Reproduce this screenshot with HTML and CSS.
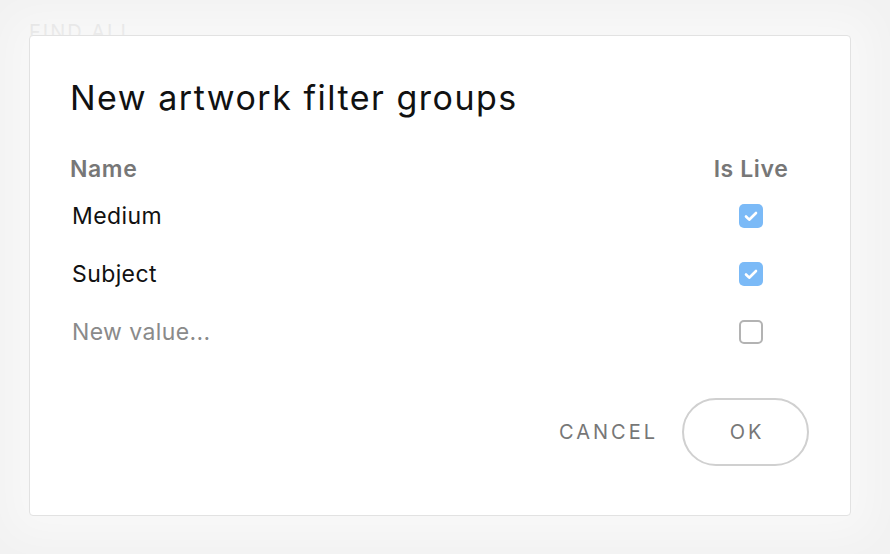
FILE: index.html
```html
<!DOCTYPE html>
<html>
<head>
<meta charset="utf-8">
<link rel="stylesheet" href="styles.css">
</head>
<body>
<div class="page">
  <div class="bg-title">FIND ALL</div>
</div>
<div class="dialog">
  <h1 class="title">New artwork filter groups</h1>
  <div class="table">
    <div class="row head">
      <div class="name">Name</div>
      <div class="live">Is Live</div>
    </div>
    <div class="row">
      <div class="name">Medium</div>
      <div class="live"><span class="cb checked"><svg viewBox="0 0 24 24" width="24" height="24"><path d="M7 12.5l3.2 3.2L17 9" fill="none" stroke="#fff" stroke-width="2.6" stroke-linecap="round" stroke-linejoin="round"/></svg></span></div>
    </div>
    <div class="row">
      <div class="name">Subject</div>
      <div class="live"><span class="cb checked"><svg viewBox="0 0 24 24" width="24" height="24"><path d="M7 12.5l3.2 3.2L17 9" fill="none" stroke="#fff" stroke-width="2.6" stroke-linecap="round" stroke-linejoin="round"/></svg></span></div>
    </div>
    <div class="row">
      <div class="name placeholder">New value...</div>
      <div class="live"><span class="cb"></span></div>
    </div>
  </div>
  <div class="actions">
    <button class="btn cancel">CANCEL</button>
    <button class="btn ok">OK</button>
  </div>
</div>
</body>
</html>
```
FILE: styles.css
```css
* { box-sizing: border-box; }
html, body { margin: 0; padding: 0; }
body {
  width: 890px;
  height: 554px;
  overflow: hidden;
  background: #f2f2f2;
  font-family: "Inter", "Lato", sans-serif;
  position: relative;
}
.page {
  padding: 22px 29px;
}
.bg-title {
  font-size: 20px;
  letter-spacing: 2px;
  color: #dcdcdc;
  line-height: 20px;
}
.dialog {
  position: absolute;
  left: 29px;
  top: 35px;
  width: 822px;
  height: 481px;
  background: #fff;
  border: 1px solid #e2e2e2;
  border-radius: 4px;
  box-shadow: 0 0 40px 20px rgba(255,255,255,0.5);
  padding: 40px 40px 0 40px;
}
.title {
  margin: 0;
  font-weight: 400;
  font-size: 34px;
  line-height: 44px;
  letter-spacing: 1.5px;
  color: #111;
}
.table {
  margin-top: 31px;
  padding-right: 21px;
}
.row {
  display: flex;
  justify-content: space-between;
  align-items: center;
  height: 58px;
  padding-left: 2px;
  font-size: 23px;
  letter-spacing: 0.4px;
  color: #111;
}
.row.head {
  height: 36px;
  padding-left: 0;
  font-weight: 600;
  font-size: 23px;
  letter-spacing: 0.6px;
  color: #777;
}
.placeholder { color: #8a8a8a; }
.live {
  width: 76px;
  display: flex;
  justify-content: center;
  white-space: nowrap;
}
.cb {
  display: block;
  width: 24px;
  height: 24px;
  border-radius: 5px;
  border: 2px solid #b3b3b3;
  background: #fff;
}
.cb.checked {
  border: none;
  background: #7bbaf7;
}
.cb svg { display: block; }
.actions {
  display: flex;
  justify-content: flex-end;
  align-items: center;
  margin-top: 37px;
  padding-right: 1px;
  gap: 24px;
}
.btn {
  font-family: "Inter", "Lato", sans-serif;
  font-size: 20px;
  letter-spacing: 3px;
  color: #777;
  background: none;
  border: none;
  cursor: pointer;
}
.cancel { padding: 0; }
.ok {
  width: 127px;
  height: 68px;
  border: 2px solid #d0d0d0;
  border-radius: 34px;
  padding: 0 0 0 3px;
}
```
